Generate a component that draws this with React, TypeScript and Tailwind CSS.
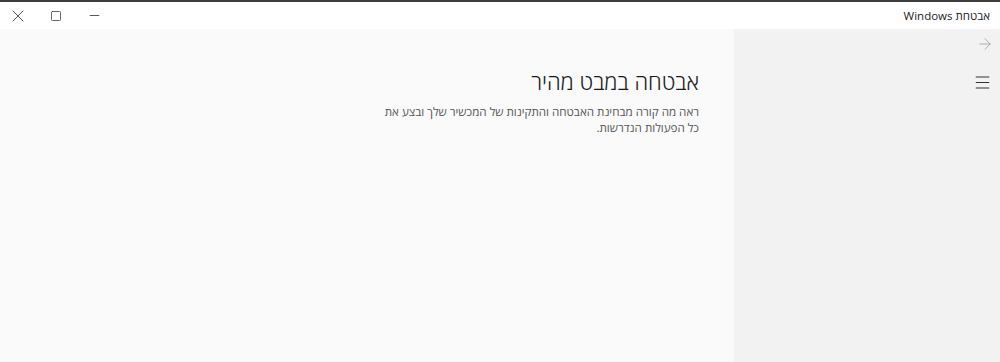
import { ArrowRight, Menu, Minus, Square, X } from "lucide-react";

export default function App() {
  return (
    <div
      dir="rtl"
      className="flex h-[362px] w-[1000px] flex-col overflow-hidden bg-[#fafafa] text-[#1f1f1f]"
      style={{ fontFamily: '"Open Sans", "DejaVu Sans", sans-serif' }}
    >
      {/* title bar */}
      <div className="flex h-[29px] shrink-0 items-center border-t-2 border-[#3c3c3c] bg-white">
        <span className="mr-[10px] text-[11.5px] text-[#222]">אבטחת Windows</span>
        <div className="mr-auto flex h-full items-center" dir="ltr">
          <button className="flex h-full w-[36px] items-center justify-center" type="button">
            <X className="h-[20px] w-[20px] text-[#333]" strokeWidth={1} />
          </button>
          <button className="flex h-full w-[40px] items-center justify-center" type="button">
            <Square className="h-[12px] w-[12px] text-[#333]" strokeWidth={1.5} />
          </button>
          <button className="flex h-full w-[36px] items-center justify-center" type="button">
            <Minus className="h-[15px] w-[15px] text-[#333]" strokeWidth={1.3} />
          </button>
        </div>
      </div>

      <div className="flex flex-1">
        {/* side nav */}
        <aside className="flex w-[266px] shrink-0 flex-col bg-[#f2f2f2] pr-[3px]">
          <div className="flex h-[30px] w-[24px] items-center justify-center">
            <ArrowRight className="h-[18px] w-[18px] text-[#a0a0a0]" strokeWidth={1.1} />
          </div>
          <div className="mt-[8px] flex h-[30px] w-[30px] items-center justify-center">
            <Menu className="h-[19px] w-[19px] text-[#333]" strokeWidth={1.4} />
          </div>
        </aside>

        {/* main */}
        <main className="flex-1 pr-[35px] pt-[37px]">
          <h1 className="text-[22px] font-light leading-[30px] text-[#1a1a1a]">אבטחה במבט מהיר</h1>
          <p className="mt-[8px] w-[318px] text-[11.6px] leading-[16px] text-[#555]">
            ראה מה קורה מבחינת האבטחה והתקינות של המכשיר שלך ובצע את כל הפעולות הנדרשות.
          </p>
        </main>
      </div>
    </div>
  );
}
